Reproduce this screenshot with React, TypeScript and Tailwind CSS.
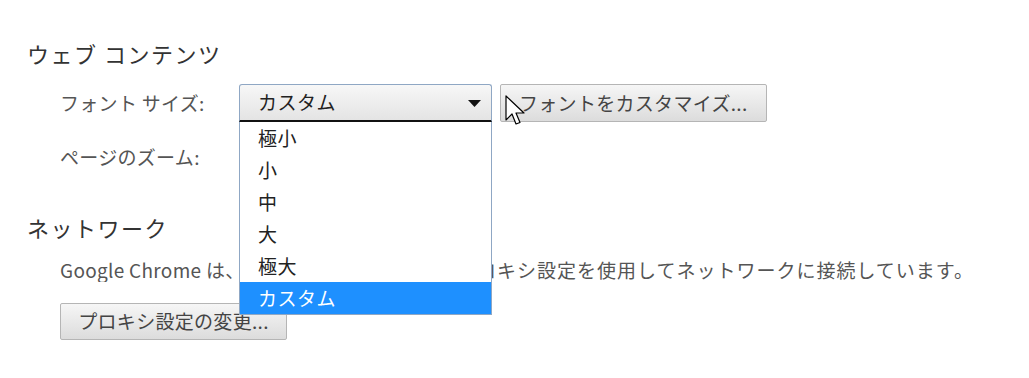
import React from "react";

const items = ["極小", "小", "中", "大", "極大", "カスタム"];

export default function App() {
  return (
    <div className="relative w-[1029px] h-[378px] overflow-hidden bg-white font-['Noto_Sans_CJK_JP','Noto_Sans',sans-serif] text-[#444]">
      <div className="pl-[27px] pt-[38px]">
        <h2 className="text-[22px] leading-[30px] tracking-[1.5px] text-[#333]">ウェブ コンテンツ</h2>
        <div className="pl-[33px]">
          <div className="mt-[16px] flex h-[38px] items-center">
            <div className="w-[179px] text-[19px] leading-[24px] tracking-[0.3px] text-[#555]">フォント サイズ:</div>
            <div className="relative flex h-[38px] w-[253px] items-center rounded-t-[3px] border border-b-2 border-[#8fa7c4] border-b-[#111] bg-gradient-to-b from-[#f7f7f7] to-[#e4e4e4] pl-[18px] text-[19px] tracking-[0.5px] text-[#222]">
              カスタム
              <svg className="absolute left-[228px] top-[15px]" width="13" height="7" viewBox="0 0 13 7">
                <path d="M0 0 H13 L6.5 7 Z" fill="#111" />
              </svg>
            </div>
            <div className="ml-[8px] flex h-[38px] w-[267px] items-center rounded-[2px] border border-[#b5b5b5] bg-gradient-to-b from-[#f6f6f6] to-[#dcdcdc] pl-[18px] text-[19px] tracking-[0.3px] text-[#444]">
              フォントをカスタマイズ...
            </div>
          </div>
          <div className="mt-[16px] flex h-[38px] items-center">
            <div className="text-[19px] leading-[24px] tracking-[0.3px] text-[#555]">ページのズーム:</div>
          </div>
        </div>
        <h2 className="mt-[36px] text-[22px] leading-[30px] tracking-[1.5px] text-[#333]">ネットワーク</h2>
        <div className="pl-[33px]">
          <div className="mt-[16px] flex whitespace-nowrap text-[19px] leading-[24px] text-[#555]">
            <span className="block w-[417px] overflow-hidden tracking-[0.3px]">Google Chrome は、パソコンのシステム プ</span>
            <span className="block tracking-[1px]">ロキシ設定を使用してネットワークに接続しています。</span>
          </div>
          <div className="mt-[21px] flex h-[37px] w-[227px] items-center justify-center rounded-[2px] border border-[#b5b5b5] bg-gradient-to-b from-[#f6f6f6] to-[#dcdcdc] text-[19px] tracking-[0.3px] text-[#444]">
            プロキシ設定の変更...
          </div>
        </div>
      </div>

      <div className="absolute left-[239px] top-[122px] w-[253px] border-x border-b border-[#8fa7c4] bg-white">
        {items.map((it, i) => (
          <div
            key={it}
            className={
              i === items.length - 1
                ? "flex h-[32px] items-center bg-[#1e90ff] pl-[18px] text-[19px] tracking-[0.5px] text-white"
                : "flex h-[32px] items-center pl-[18px] text-[19px] tracking-[0.5px] text-[#222]"
            }
          >
            {it}
          </div>
        ))}
      </div>

      <svg className="absolute left-[505px] top-[95px]" width="22" height="34" viewBox="0 0 22 34">
        <path
          d="M1 1 L1 25 L7 19 L11 29 L15 27.5 L11 18 L19 18 Z"
          fill="#fff"
          stroke="#000"
          strokeWidth="1.2"
          strokeLinejoin="round"
        />
      </svg>
    </div>
  );
}
